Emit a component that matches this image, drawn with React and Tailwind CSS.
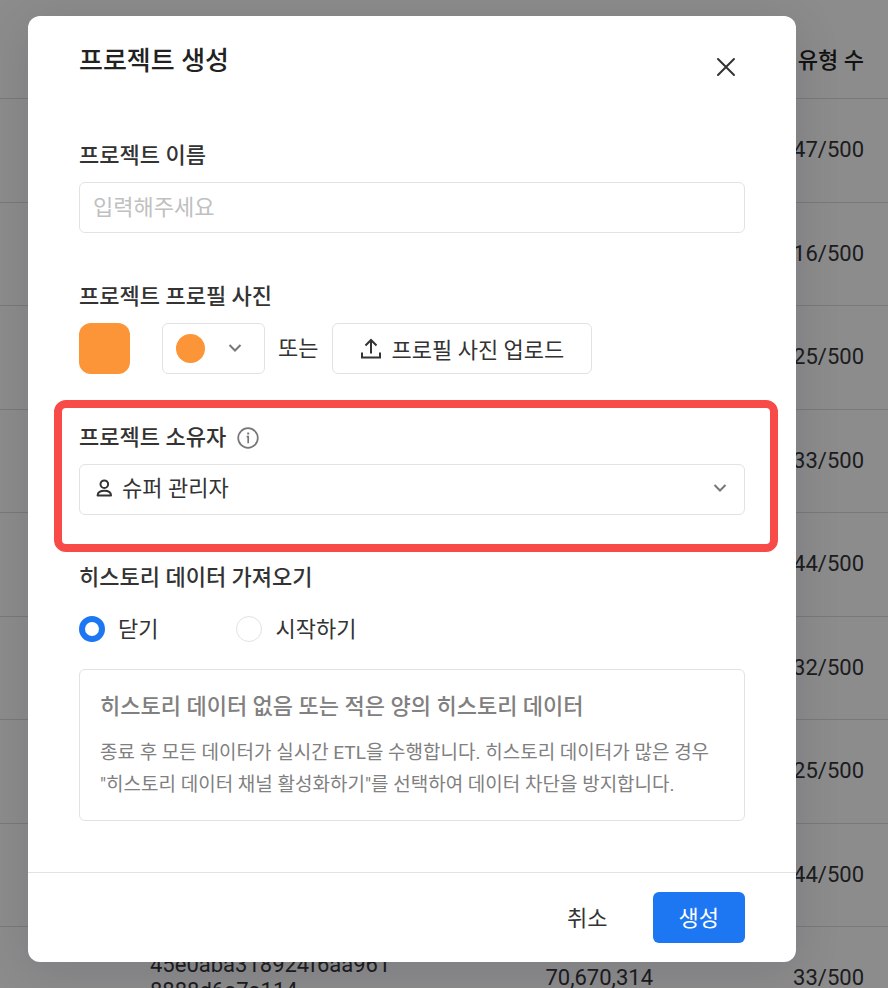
import React, { useState } from 'react';

const rows = [
    { id: '', count: '', quota: '47/500' },
    { id: '', count: '', quota: '16/500' },
    { id: '', count: '', quota: '25/500' },
    { id: '', count: '', quota: '33/500' },
    { id: '', count: '', quota: '44/500' },
    { id: '', count: '', quota: '32/500' },
    { id: '', count: '', quota: '25/500' },
    { id: '', count: '', quota: '44/500' },
    { id: '45e0aba318924f6aa961 8888d6a7a114', count: '70,670,314', quota: '33/500' },
];

function ChevronIcon({ className }) {
    return (
        <svg className={className} width="14" height="10" viewBox="0 0 14 10" fill="none" stroke="currentColor" strokeWidth="2" aria-hidden="true">
            <path d="M1.5 2 L7 7.5 L12.5 2" />
        </svg>
    );
}

function UserIcon({ className }) {
    return (
        <svg className={className} width="18" height="20" viewBox="0 0 18 20" fill="none" stroke="currentColor" strokeWidth="2" aria-hidden="true">
            <circle cx="9.3" cy="6.2" r="3.8" />
            <path d="M2.6 17.4 C2.6 14.2 5.6 12.8 9.3 12.8 C13 12.8 16 14.2 16 17.4 Z" strokeLinejoin="round" />
        </svg>
    );
}

function UploadIcon() {
    return (
        <svg width="22" height="22" viewBox="0 0 22 22" fill="none" stroke="currentColor" strokeWidth="2" aria-hidden="true">
            <path d="M11 15.5 V2 M5.5 7.5 L11 2 L16.5 7.5" />
            <path d="M2 14.5 V19.5 H20 V14.5" />
        </svg>
    );
}

function InfoIcon() {
    return (
        <svg width="22" height="22" viewBox="0 0 22 22" fill="none" stroke="currentColor" aria-hidden="true">
            <circle cx="11" cy="11" r="9.8" strokeWidth="1.7" />
            <path d="M9.6 9.7 H11.2 V16.2" strokeWidth="1.7" />
            <path d="M11.2 5.5 V7.5" strokeWidth="2" />
        </svg>
    );
}

function ProjectTable() {
    return (
        <table className="w-full text-[22px] leading-[26px] text-[#35363a]">
            <thead>
                <tr className="h-[98px] border-b border-[#dcdcde]">
                    <th></th>
                    <th></th>
                    <th className="w-[235px] pt-6 pr-6 text-right font-medium text-[#222]">이벤트 유형 수</th>
                </tr>
            </thead>
            <tbody>
                {rows.map((row, index) => (
                    <tr key={index} className="h-[103px] border-b border-[#dcdcde] odd:h-[104px]">
                        <td className="w-[430px] pl-[150px] text-left">{row.id}</td>
                        <td className="text-right">{row.count}</td>
                        <td className="pr-6 text-right">{row.quota}</td>
                    </tr>
                ))}
            </tbody>
        </table>
    );
}

export default function App() {
    const [name, setName] = useState('');
    const [owner, setOwner] = useState('super');
    const [history, setHistory] = useState('off');

    const radioClass =
        'size-[26px] appearance-none rounded-full border border-[#e2e2e2] bg-white checked:border-6 checked:border-[#1d76f2]';

    return (
        <div className="relative h-screen overflow-hidden bg-white font-['Roboto','Noto_Sans_CJK_KR',sans-serif] text-[22px] text-[#333]">
            <ProjectTable />

            <div className="absolute inset-0 flex items-start bg-black/45 pt-4 pr-[92px] pl-7">
                <form
                    role="dialog"
                    aria-labelledby="dialog-title"
                    className="flex-1 rounded-xl bg-white shadow-[0_8px_48px_rgba(20,20,50,0.12)]"
                    onSubmit={(e) => e.preventDefault()}
                >
                    <header className="flex items-start justify-between px-[51px] pt-7">
                        <h1 id="dialog-title" className="text-[26px] leading-[34px] font-medium text-[#222]">프로젝트 생성</h1>
                        <button type="button" aria-label="닫기" className="flex h-[46px] w-[38px] items-center justify-center">
                            <svg width="20" height="20" viewBox="0 0 20 20" stroke="currentColor" strokeWidth="2" strokeLinecap="round" aria-hidden="true">
                                <path d="M2 2 L18 18 M18 2 L2 18" />
                            </svg>
                        </button>
                    </header>

                    <div className="px-[51px] pt-[49px] pb-[51px]">
                        <label htmlFor="name" className="block leading-[33px] font-medium">프로젝트 이름</label>
                        <input
                            id="name"
                            type="text"
                            value={name}
                            onChange={(e) => setName(e.target.value)}
                            placeholder="입력해주세요"
                            className="mt-2.5 h-[51px] w-full rounded-md border border-[#e2e2e2] px-[13px] outline-none placeholder:text-[#c0c0c0]"
                        />

                        <h2 className="mt-[47px] leading-[33px] font-medium">프로젝트 프로필 사진</h2>
                        <div className="mt-2.5 flex h-[51px] items-center">
                            <span className="size-[51px] rounded-xl bg-[#fc9438]" />
                            <button
                                type="button"
                                aria-label="색상 선택"
                                className="ml-8 flex h-[51px] w-[103px] items-center justify-between rounded-md border border-[#e2e2e2] pr-[22px] pl-[13px]"
                            >
                                <span className="size-[29px] rounded-full bg-[#fc9438]" />
                                <ChevronIcon className="mb-0.5 text-[#777]" />
                            </button>
                            <span className="mr-3.5 ml-[13px]">또는</span>
                            <button type="button" className="flex h-[51px] items-center gap-[9px] rounded-md border border-[#e2e2e2] px-[27px]">
                                <UploadIcon />
                                <span className="pt-[3px]">프로필 사진 업로드</span>
                            </button>
                        </div>

                        <section className="mt-[26px] -mr-[33px] -ml-[25px] rounded-xl border-8 border-[#f84a46] pt-[13px] pr-[25px] pb-[29px] pl-[17px]">
                            <div className="flex items-center gap-[11px] leading-[33px]">
                                <label htmlFor="owner" className="font-medium">프로젝트 소유자</label>
                                <span className="text-[#777]"><InfoIcon /></span>
                            </div>
                            <div className="relative mt-2.5">
                                <UserIcon className="absolute top-3.5 left-4" />
                                <select
                                    id="owner"
                                    value={owner}
                                    onChange={(e) => setOwner(e.target.value)}
                                    className="block h-[51px] w-full appearance-none rounded-md border border-[#e2e2e2] bg-transparent pb-0.5 pl-[42px] outline-none"
                                >
                                    <option value="super">슈퍼 관리자</option>
                                </select>
                                <ChevronIcon className="pointer-events-none absolute top-[19px] right-[18px] text-[#777]" />
                            </div>
                        </section>

                        <fieldset className="mt-[9px]">
                            <legend className="leading-[33px] font-medium">히스토리 데이터 가져오기</legend>
                            <div className="mt-[22px] flex h-[26px] items-center gap-[78px]">
                                <label className="flex items-center gap-[13px]">
                                    <input
                                        type="radio"
                                        name="history"
                                        className={radioClass}
                                        checked={history === 'off'}
                                        onChange={() => setHistory('off')}
                                    />
                                    닫기
                                </label>
                                <label className="flex items-center gap-[13px]">
                                    <input
                                        type="radio"
                                        name="history"
                                        className={radioClass}
                                        checked={history === 'on'}
                                        onChange={() => setHistory('on')}
                                    />
                                    시작하기
                                </label>
                            </div>
                        </fieldset>

                        <div className="mt-[27px] rounded-md border border-[#e2e2e2] px-5 pt-5 pb-[19px] text-[#808080]">
                            <h3 className="leading-[33px] font-medium">히스토리 데이터 없음 또는 적은 양의 히스토리 데이터</h3>
                            <p className="mt-3.5 text-[19px] leading-8">
                                종료 후 모든 데이터가 실시간 ETL을 수행합니다. 히스토리 데이터가 많은 경우
                                "히스토리 데이터 채널 활성화하기"를 선택하여 데이터 차단을 방지합니다.
                            </p>
                        </div>
                    </div>

                    <footer className="flex justify-end gap-[19px] border-t border-[#e2e2e2] px-[51px] py-[19px]">
                        <button type="button" className="h-[51px] px-[26px] pt-0.5">취소</button>
                        <button type="submit" className="h-[51px] rounded-md bg-[#1d76f2] px-[26px] pt-0.5 text-white">생성</button>
                    </footer>
                </form>
            </div>
        </div>
    );
}
